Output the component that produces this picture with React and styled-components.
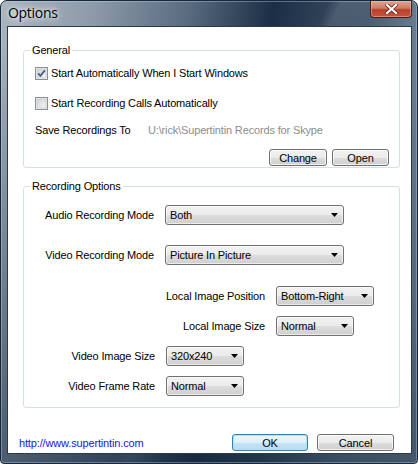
import styled, { createGlobalStyle } from 'styled-components'

const GlobalStyle = createGlobalStyle`
  html, body {
    margin: 0;
    padding: 0;
    background: #fff;
  }
  body {
    font-family: "Liberation Sans", Arial, sans-serif;
    font-size: 11px;
    letter-spacing: -0.15px;
    color: #000;
  }
  * {
    box-sizing: border-box;
  }
`

const Window = styled.div`
  width: 418px;
  height: 464px;
  display: flex;
  flex-direction: column;
  border: 1px solid #17263a;
  border-radius: 7px 7px 4px 4px;
  overflow: hidden;
  background:
    linear-gradient(to bottom, rgba(0, 0, 0, 0) 0, rgba(0, 0, 0, 0) 40px, rgba(18, 38, 60, 0.55) 100%),
    linear-gradient(115deg, rgba(255, 255, 255, 0) 52%, rgba(255, 255, 255, 0.12) 54%, rgba(255, 255, 255, 0) 60%),
    linear-gradient(100deg, #a9b4be 0%, #8f9cab 18%, #596b7f 38%, #1c2e45 55%, #34475d 68%, #6c7e90 85%, #7f8f9e 100%);
  box-shadow: inset 0 0 0 1px rgba(200, 225, 240, 0.35);
`

const TitleBar = styled.div`
  height: 25px;
  display: flex;
  justify-content: space-between;
  align-items: flex-start;
  padding-left: 7px;
`

const Title = styled.span`
  font-family: "Open Sans", "Noto Sans", sans-serif;
  font-size: 14px;
  letter-spacing: -0.3px;
  line-height: 24px;
  color: #000;
  text-shadow: 0 0 8px rgba(255, 255, 255, 0.95), 0 0 4px rgba(255, 255, 255, 0.9);
`

const CloseButton = styled.button`
  width: 42px;
  height: 17px;
  margin-right: 5px;
  padding: 0;
  display: flex;
  align-items: center;
  justify-content: center;
  border: 1px solid #4a1d18;
  border-top: none;
  border-radius: 0 0 4px 4px;
  background: linear-gradient(to bottom, #e0a594 0%, #cf7a66 45%, #b8402e 55%, #c5553c 100%);
  box-shadow: inset 0 0 0 1px rgba(255, 200, 180, 0.45);
  cursor: pointer;
`

const Client = styled.div`
  flex: 1;
  margin: 0 5px 9px 6px;
  border: 1px solid #2a3a4c;
  background: #fff;
  display: flex;
  flex-direction: column;
  padding: 0 11px 2px 15px;
`

const Group = styled.div`
  position: relative;
  margin-top: ${p => p.$top}px;
  padding-bottom: ${p => p.$bottom}px;
  border: 1px solid #d5dfe5;
  border-radius: 3px;
  display: flex;
  flex-direction: column;
`

const Legend = styled.span`
  position: absolute;
  top: -7px;
  left: 6px;
  padding: 0 2px;
  background: #fff;
  line-height: 13px;
`

const Row = styled.div`
  height: 20px;
  margin-top: ${p => p.$top}px;
  padding-left: 11px;
  display: flex;
  align-items: center;
`

const CheckLabel = styled.label`
  display: flex;
  align-items: center;
  gap: 3px;
  cursor: default;
`

const PathLabel = styled.span`
  width: 113px;
`

const PathValue = styled.span`
  color: #8d8d8d;
`

const ButtonRow = styled.div`
  margin-top: ${p => p.$top}px;
  padding-right: 10px;
  display: flex;
  justify-content: flex-end;
  gap: 5px;
`

const Button = styled.button`
  width: ${p => p.$w}px;
  height: 17px;
  padding: 0;
  font: inherit;
  letter-spacing: inherit;
  color: #000;
  border: 1px solid ${p => (p.$default ? '#3c7fb1' : '#707070')};
  border-radius: 3px;
  background: ${p =>
    p.$default
      ? 'linear-gradient(to bottom, #eaf6fd 0%, #dcf0fb 50%, #c6e5f6 50%, #b6dbef 100%)'
      : 'linear-gradient(to bottom, #f2f2f2 0%, #ebebeb 50%, #dddddd 50%, #cfcfcf 100%)'};
  box-shadow: ${p => (p.$default ? 'inset 0 0 0 1px #a9e4f8' : 'inset 0 0 0 1px rgba(255,255,255,0.7)')};
  cursor: pointer;
`

const Field = styled.div`
  margin-top: ${p => p.$top}px;
  display: grid;
  grid-template-columns: ${p => p.$label}px ${p => p.$select}px;
  column-gap: 11px;
  align-items: center;
`

const FieldLabel = styled.span`
  text-align: right;
`

const Combo = styled.div`
  height: 20px;
  display: flex;
  align-items: center;
  justify-content: space-between;
  padding: 0 5px 0 4px;
  border: 1px solid #707070;
  border-radius: 3px;
  background: linear-gradient(to bottom, #f2f2f2 0%, #ebebeb 50%, #dddddd 50%, #cfcfcf 100%);
  box-shadow: inset 0 0 0 1px rgba(255, 255, 255, 0.6);
`

const Footer = styled.div`
  margin-top: auto;
  margin-left: -4px;
  margin-right: 6px;
  display: flex;
  align-items: center;
  justify-content: space-between;
`

const Link = styled.a`
  color: #1515f0;
  text-decoration: none;
`

const FooterButtons = styled.div`
  display: flex;
  gap: 9px;
`

const CheckBox = ({ checked }) => (
  <svg width="13" height="13" viewBox="0 0 13 13">
    <defs>
      <linearGradient id={checked ? 'cbg1' : 'cbg2'} x1="0" y1="0" x2="1" y2="1">
        <stop offset="0" stopColor="#cfd3d8" />
        <stop offset="1" stopColor="#f7f7f7" />
      </linearGradient>
    </defs>
    <rect x="0.5" y="0.5" width="12" height="12" fill="#f4f4f4" stroke="#8e8f8f" />
    <rect x="2" y="2" width="9" height="9" fill={`url(#${checked ? 'cbg1' : 'cbg2'})`} stroke="#c4c8cd" strokeWidth="0.8" />
    {checked && (
      <path d="M3.2 6.4 L5.4 8.8 L9.8 3.4" fill="none" stroke="#4a5f8e" strokeWidth="1.9" />
    )}
  </svg>
)

const Arrow = () => (
  <svg width="7" height="4" viewBox="0 0 7 4">
    <path d="M0 0 H7 L3.5 4 Z" fill="#000" />
  </svg>
)

const Select = ({ value }) => (
  <Combo role="combobox">
    <span>{value}</span>
    <Arrow />
  </Combo>
)

const CloseIcon = () => (
  <svg width="13" height="10" viewBox="0 0 13 10">
    <path d="M2 1 L11 9 M11 1 L2 9" stroke="#6a2418" strokeWidth="3.6" strokeLinecap="square" />
    <path d="M2 1 L11 9 M11 1 L2 9" stroke="#fff" strokeWidth="2.2" strokeLinecap="square" />
  </svg>
)

const recordingFields = [
  { label: 'Audio Recording Mode', value: 'Both', top: 18, labelW: 130, selectW: 179 },
  { label: 'Video Recording Mode', value: 'Picture In Picture', top: 20, labelW: 130, selectW: 179 },
  { label: 'Local Image Position', value: 'Bottom-Right', top: 21, labelW: 241, selectW: 98 },
  { label: 'Local Image Size', value: 'Normal', top: 10, labelW: 241, selectW: 78 },
  { label: 'Video Image Size', value: '320x240', top: 10, labelW: 131, selectW: 78 },
  { label: 'Video Frame Rate', value: 'Normal', top: 10, labelW: 131, selectW: 78 },
]

const App = () => {
  return (
    <>
      <GlobalStyle />
      <Window>
        <TitleBar>
          <Title>Options</Title>
          <CloseButton aria-label="Close">
            <CloseIcon />
          </CloseButton>
        </TitleBar>
        <Client>
          <Group $top={23} $bottom={1}>
            <Legend>General</Legend>
            <Row $top={12}>
              <CheckLabel>
                <CheckBox checked />
                Start Automatically When I Start Windows
              </CheckLabel>
            </Row>
            <Row $top={10}>
              <CheckLabel>
                <CheckBox />
                Start Recording Calls Automatically
              </CheckLabel>
            </Row>
            <Row $top={7}>
              <PathLabel>Save Recordings To</PathLabel>
              <PathValue>U:\rick\Supertintin Records for Skype</PathValue>
            </Row>
            <ButtonRow $top={9}>
              <Button $w={58}>Change</Button>
              <Button $w={57}>Open</Button>
            </ButtonRow>
          </Group>

          <Group $top={18} $bottom={11}>
            <Legend>Recording Options</Legend>
            {recordingFields.map(f => (
              <Field key={f.label} $top={f.top} $label={f.labelW} $select={f.selectW}>
                <FieldLabel>{f.label}</FieldLabel>
                <Select value={f.value} />
              </Field>
            ))}
          </Group>

          <Footer>
            <Link href="#">http://www.supertintin.com</Link>
            <FooterButtons>
              <Button $w={76} $default>OK</Button>
              <Button $w={77}>Cancel</Button>
            </FooterButtons>
          </Footer>
        </Client>
      </Window>
    </>
  )
}

export default App
